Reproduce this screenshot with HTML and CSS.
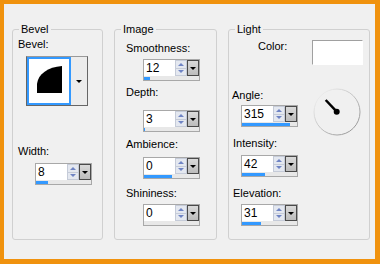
FILE: index.html
```html
<!DOCTYPE html>
<html lang="en">
<head>
    <meta charset="UTF-8">
    <title>Bevel</title>
    <link rel="stylesheet" href="styles.css">
</head>
<body>
    <div class="frame">
        <fieldset class="group group-bevel">
            <legend>Bevel</legend>
            <span class="label lbl-bevel">Bevel:</span>
            <div class="bevel-pick">
                <div class="bevel-cell">
                    <svg width="40" height="44" viewBox="0 0 40 44">
                        <path d="M8 34 V25 C9 15 19 8 33 7 V34 Z" fill="#000"/>
                    </svg>
                </div>
                <div class="bevel-btn"><span class="arrow-down"></span></div>
            </div>
            <span class="label lbl-width">Width:</span>
            <div class="spin spin-width">
                <div class="spin-row">
                    <span class="spin-value">8</span>
                    <span class="spin-arrows"><span class="up"></span><span class="down"></span></span>
                    <span class="spin-drop"><span class="arrow-down"></span></span>
                </div>
                <div class="spin-track"><div class="spin-fill" style="width: 12px"></div></div>
            </div>
        </fieldset>

        <fieldset class="group group-image">
            <legend>Image</legend>
            <span class="label lbl-smooth">Smoothness:</span>
            <div class="spin spin-smooth">
                <div class="spin-row">
                    <span class="spin-value">12</span>
                    <span class="spin-arrows"><span class="up"></span><span class="down"></span></span>
                    <span class="spin-drop"><span class="arrow-down"></span></span>
                </div>
                <div class="spin-track"><div class="spin-fill" style="width: 6px"></div></div>
            </div>
            <span class="label lbl-depth">Depth:</span>
            <div class="spin spin-depth">
                <div class="spin-row">
                    <span class="spin-value">3</span>
                    <span class="spin-arrows"><span class="up"></span><span class="down"></span></span>
                    <span class="spin-drop"><span class="arrow-down"></span></span>
                </div>
                <div class="spin-track"><div class="spin-fill" style="width: 1px"></div></div>
            </div>
            <span class="label lbl-amb">Ambience:</span>
            <div class="spin spin-amb">
                <div class="spin-row">
                    <span class="spin-value">0</span>
                    <span class="spin-arrows"><span class="up"></span><span class="down"></span></span>
                    <span class="spin-drop"><span class="arrow-down"></span></span>
                </div>
                <div class="spin-track"><div class="spin-fill" style="width: 28px"></div></div>
            </div>
            <span class="label lbl-shine">Shininess:</span>
            <div class="spin spin-shine">
                <div class="spin-row">
                    <span class="spin-value">0</span>
                    <span class="spin-arrows"><span class="up"></span><span class="down"></span></span>
                    <span class="spin-drop"><span class="arrow-down"></span></span>
                </div>
                <div class="spin-track"><div class="spin-fill" style="width: 0px"></div></div>
            </div>
        </fieldset>

        <fieldset class="group group-light">
            <legend>Light</legend>
            <div class="color-row">
                <span class="label lbl-color">Color:</span>
                <div class="swatch"></div>
            </div>
            <div class="angle-row">
                <div class="angle-col">
                    <span class="label lbl-angle">Angle:</span>
                    <div class="spin spin-angle">
                        <div class="spin-row">
                            <span class="spin-value">315</span>
                            <span class="spin-arrows"><span class="up"></span><span class="down"></span></span>
                            <span class="spin-drop"><span class="arrow-down"></span></span>
                        </div>
                        <div class="spin-track"><div class="spin-fill" style="width: 48px"></div></div>
                    </div>
                </div>
                <svg class="dial" width="48" height="48" viewBox="0 0 48 48">
                    <defs>
                        <linearGradient id="rim" x1="0" y1="0" x2="1" y2="1">
                            <stop offset="0" stop-color="#fafafa"/>
                            <stop offset="1" stop-color="#8a8a8a"/>
                        </linearGradient>
                    </defs>
                    <circle cx="24" cy="24" r="23" fill="#f0f0f0" stroke="url(#rim)" stroke-width="1"/>
                    <line x1="12.7" y1="12" x2="23.7" y2="23.7" stroke="#000" stroke-width="2.5"/>
                    <circle cx="23.7" cy="23.7" r="3" fill="#000"/>
                </svg>
            </div>
            <span class="label lbl-int">Intensity:</span>
            <div class="spin spin-int">
                <div class="spin-row">
                    <span class="spin-value">42</span>
                    <span class="spin-arrows"><span class="up"></span><span class="down"></span></span>
                    <span class="spin-drop"><span class="arrow-down"></span></span>
                </div>
                <div class="spin-track"><div class="spin-fill" style="width: 23px"></div></div>
            </div>
            <span class="label lbl-elev">Elevation:</span>
            <div class="spin spin-elev">
                <div class="spin-row">
                    <span class="spin-value">31</span>
                    <span class="spin-arrows"><span class="up"></span><span class="down"></span></span>
                    <span class="spin-drop"><span class="arrow-down"></span></span>
                </div>
                <div class="spin-track"><div class="spin-fill" style="width: 19px"></div></div>
            </div>
        </fieldset>
    </div>
</body>
</html>
```
FILE: styles.css
```css
* { margin: 0; padding: 0; box-sizing: border-box; }
body {
    font-family: "Liberation Sans", Arial, sans-serif;
    font-size: 11px;
    line-height: 13px;
    color: #000;
    background: #f0f0f0;
}
.frame {
    width: 380px;
    height: 264px;
    border: solid #f0920e;
    border-width: 4px 5px 5px 4px;
    background: #f0f0f0;
    display: flex;
    align-items: flex-start;
    gap: 11px;
    padding: 19px 0 0 8px;
}
.group {
    border: 1px solid #d0d0d0;
    border-radius: 3px;
    height: 217px;
    min-width: 0;
}
.group legend {
    margin-left: 6px;
    padding: 0 2px;
    line-height: 13px;
    color: #000;
}
.group-bevel { width: 91px; }
.group-image { width: 103px; }
.group-light { width: 142px; }
.label {
    display: block;
    height: 13px;
    white-space: nowrap;
    color: #000;
}

/* Bevel */
.lbl-bevel { margin: 2px 0 0 5px; }
.bevel-pick {
    display: flex;
    width: 62px;
    height: 50px;
    margin: 5px 0 0 13px;
    border: 1px solid #666;
    border-top-color: #999;
}
.bevel-cell {
    width: 44px;
    height: 48px;
    border: 2px solid #3399ff;
    background: #fff;
}
.bevel-cell svg { display: block; }
.bevel-btn {
    flex: 1;
    background: #ececec;
    display: flex;
    align-items: center;
    justify-content: center;
}
.lbl-width { margin: 39px 0 0 5px; }
.spin-width { margin: 5px 0 0 22px; }

/* Image */
.group-image .label { margin-left: 11px; }
.group-image .spin { margin-left: 28px; }
.lbl-smooth { margin-top: 6px; }
.spin-smooth { margin-top: 4px; }
.lbl-depth { margin-top: 5px; }
.spin-depth { margin-top: 11px; }
.lbl-amb { margin-top: 6px; }
.spin-amb { margin-top: 6px; }
.lbl-shine { margin-top: 8px; }
.spin-shine { margin-top: 4px; }

/* Light */
.color-row {
    display: flex;
    align-items: flex-start;
    margin-top: 4px;
}
.lbl-color { margin-left: 29px; }
.swatch {
    width: 51px;
    height: 25px;
    margin: 0 6px 0 auto;
    background: #fff;
    border: 1px solid;
    border-color: #a0a0a0 #fff #fff #a0a0a0;
}
.angle-row {
    display: flex;
    align-items: flex-start;
    margin-top: 23px;
}
.angle-col { margin-left: 3px; }
.lbl-angle { margin-top: 1px; }
.spin-angle { margin: 3px 0 0 9px; }
.dial {
    display: block;
    margin: 0 8px 0 auto;
}
.group-light > .label { margin-left: 4px; }
.group-light > .spin { margin-left: 12px; }
.lbl-int { margin-top: 1px; }
.spin-int { margin-top: 5px; }
.lbl-elev { margin-top: 10px; }
.spin-elev { margin-top: 4px; }

/* Spin control with slider strip */
.spin {
    width: 57px;
    height: 22px;
    border: 1px solid #a8a8a8;
    background: #fff;
}
.spin-row {
    display: flex;
    height: 16px;
}
.spin-value {
    flex: 1;
    font-size: 12px;
    line-height: 16px;
    padding-left: 2px;
}
.spin-arrows {
    width: 12px;
    display: flex;
    flex-direction: column;
}
.spin-arrows span {
    flex: 1;
    background: #e4e8f0;
    border: 1px solid #c5cbd8;
    display: flex;
    align-items: center;
    justify-content: center;
}
.spin-arrows .down { border-top: none; }
.spin-arrows .up::before,
.spin-arrows .down::before {
    content: "";
    border-left: 3px solid transparent;
    border-right: 3px solid transparent;
}
.spin-arrows .up::before { border-bottom: 3px solid #6f84c4; }
.spin-arrows .down::before { border-top: 3px solid #6f84c4; }
.spin-drop {
    width: 12px;
    background: linear-gradient(#dadada, #bcbcbc);
    border: 1px solid #4a4a4a;
    display: flex;
    align-items: center;
    justify-content: center;
}
.arrow-down {
    border-left: 3px solid transparent;
    border-right: 3px solid transparent;
    border-top: 3px solid #000;
}
.spin-track {
    height: 4px;
    background: #e8e8e8;
    padding-top: 1px;
}
.spin-fill {
    height: 3px;
    background: #3399ff;
}
```
